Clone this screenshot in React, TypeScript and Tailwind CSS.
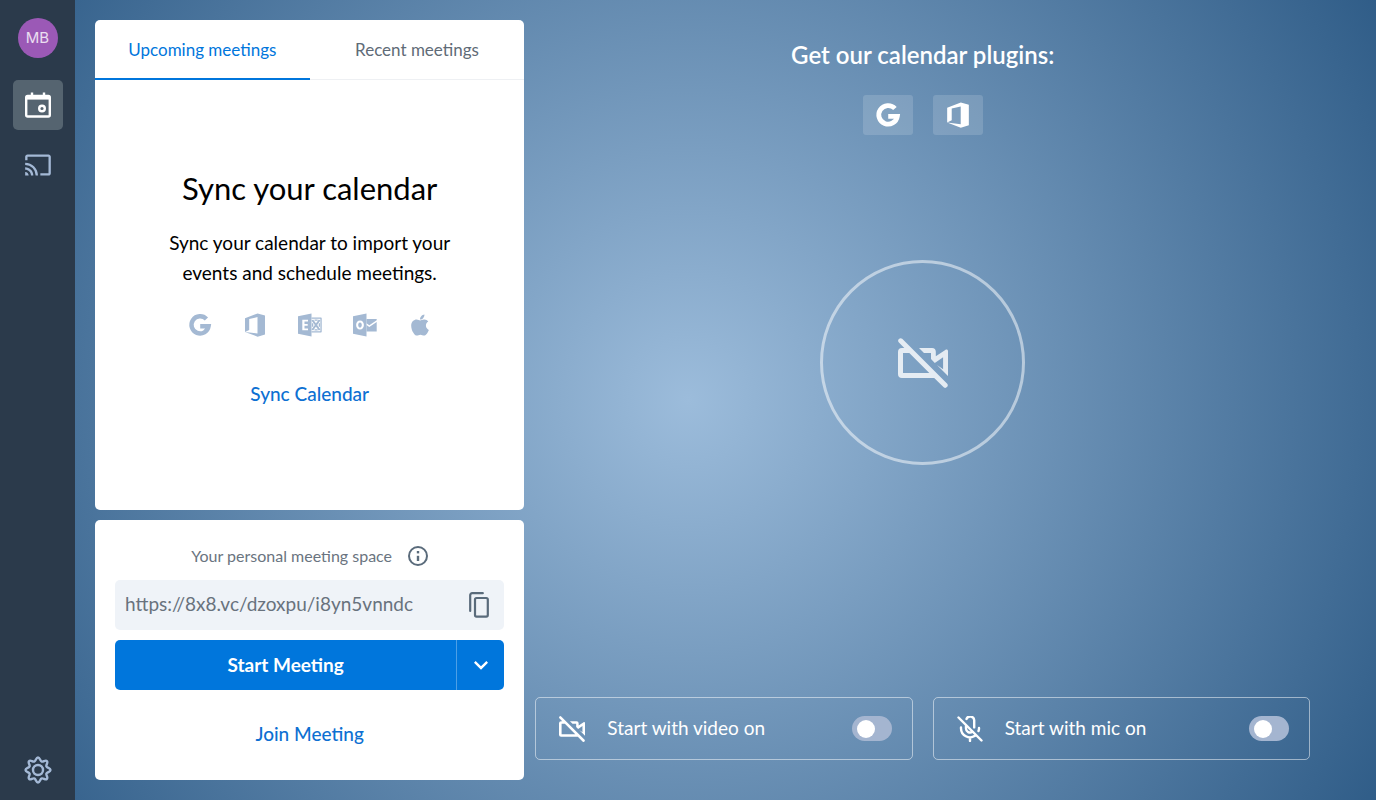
import { useState } from "react";
import type { ReactNode } from "react";
import { FaApple } from "react-icons/fa";
import { MdCast, MdOutlineKeyboardArrowDown } from "react-icons/md";

interface IconProps {
  className?: string;
}

function GoogleIcon({ className }: IconProps) {
  return (
    <svg viewBox="0 0 24 24" className={className} fill="none" stroke="currentColor" strokeWidth="4.4">
      <path d="M18.400 6A8.600 8.600 0 1 0 20.600 13.200H12.200" />
    </svg>
  );
}

function OfficeIcon({ className }: IconProps) {
  return (
    <svg viewBox="0 0 24 24" className={className} fill="currentColor">
      <path d="M2 18.900V5.200L14.600.4 22 2.500v19L14.600 23.700 2 18.900l12.500 1.600V4.100L6.200 6v10.900L2 18.900z" />
    </svg>
  );
}

function ExchangeIcon({ className }: IconProps) {
  return (
    <svg viewBox="0 0 24 24" className={className} fill="currentColor">
      <path
        fillRule="evenodd"
        d="M0 3.200 13.500.4v23.200L0 20.800V3.200zM4.300 6.700v10.600h5.700v-1.900H6.500v-2.600h3.200V11H6.500V8.600H10V6.700H4.300z"
      />
      <path
        fillRule="evenodd"
        d="M13.500 4.600H23a.7.7 0 0 1 .7.7v13.400a.7.7 0 0 1-.7.7h-9.500v-1.200h8.900V5.800h-8.900V4.600z"
      />
      <path d="m14.300 7 7.300 10M21.600 7l-7.300 10" stroke="currentColor" strokeWidth="2" />
      <path d="M16.500 7.200h3.200M16.500 16.800h3.200M14.600 10.200v3.600M21.400 10.200v3.600" stroke="currentColor" strokeWidth="1.300" />
    </svg>
  );
}

function OutlookIcon({ className }: IconProps) {
  return (
    <svg viewBox="0 0 24 24" className={className} fill="currentColor">
      <path
        fillRule="evenodd"
        d="M0 3.200 13.500.4v23.200L0 20.800V3.200zM7 7.500c-2.300 0-3.900 1.900-3.900 4.500S4.700 16.500 7 16.500s3.900-1.900 3.900-4.500S9.300 7.500 7 7.500zm0 1.900c1.100 0 1.800 1.100 1.800 2.600S8.100 14.600 7 14.600 5.200 13.500 5.200 12 5.900 9.400 7 9.400z"
      />
      <path d="M13.500 6H23.700v1.200l-7.400 5.100-2.800-2.100V6zm0 6 2.800 2.100 7.400-5v9.300H13.500V12z" />
    </svg>
  );
}

function CalendarIcon({ className }: IconProps) {
  return (
    <svg viewBox="0 0 26 26" className={className} fill="none" stroke="currentColor">
      <rect x="1.200" y="4" width="23.600" height="20.500" rx="1.500" strokeWidth="2.400" />
      <path d="M1.500 5.600h23" strokeWidth="4" />
      <path d="M7 .5v4M19 .5v4" strokeWidth="2.400" />
      <circle cx="17" cy="16.500" r="2.800" strokeWidth="2.400" />
    </svg>
  );
}

function GearIcon({ className }: IconProps) {
  return (
    <svg viewBox="0 0 28 28" className={className} fill="none" stroke="currentColor" strokeWidth="2.400" strokeLinejoin="round">
      <path d="M14 1.500C16 1.500 16 5.100 17.700 5.600 19.400 6.200 21.500 3.500 22.900 5.100 24.400 6.500 21.800 8.700 22.400 10.400 23 12 26.500 12 26.500 14S23 16 22.400 17.600c-.6 1.700 2 3.900.5 5.300-1.400 1.600-3.500-1.100-5.200-.5C16 22.900 16 26.500 14 26.500S12 22.900 10.300 22.400c-1.700-.6-3.800 2.100-5.200.5-1.500-1.400 1.100-3.600.5-5.300C5 16 1.500 16 1.500 14S5 12 5.600 10.400C6.200 8.700 3.600 6.500 5.100 5.100 6.500 3.500 8.600 6.200 10.300 5.600 12 5.100 12 1.500 14 1.500z" />
      <circle cx="14" cy="14" r="5" />
    </svg>
  );
}

function InfoIcon({ className }: IconProps) {
  return (
    <svg viewBox="0 0 20 20" className={className} fill="none" stroke="currentColor" strokeWidth="2">
      <circle cx="10" cy="10" r="9" />
      <path d="M10 9.800v5.200" strokeWidth="2.400" />
      <path d="M10 5v2.400" strokeWidth="2.400" />
    </svg>
  );
}

function CopyIcon({ className }: IconProps) {
  return (
    <svg viewBox="0 0 20 26" className={className} fill="none" stroke="currentColor" strokeWidth="2.200" strokeLinecap="round">
      <path d="M1.200 19V3.200a2 2 0 0 1 2-2h10.600" />
      <rect x="6" y="6" width="12.800" height="18.600" rx="1.500" />
    </svg>
  );
}

function VideoOffIcon({ className }: IconProps) {
  return (
    <svg viewBox="0 0 50 50" className={className} fill="currentColor">
      <path d="M4.200.8 49.200 45.800a2.500 2.500 0 0 1-3.500 3.500L36.200 39.900H4a4 4 0 0 1-4-4V14a4 4 0 0 1 4-4h2.300L.7 4.300A2.500 2.500 0 0 1 4.200.8zM5 15v20h26.300l-20-20H5z" />
      <path d="M21 10h13a3.800 3.800 0 0 1 3.800 3.800v4.400L47.300 12c1.400-.9 2.700-.2 2.700 1.300v24.700L39 27l6.100 4.200V19.300L36.800 24.900 33 21V15h-7L21 10z" />
    </svg>
  );
}

function MicOffIcon({ className }: IconProps) {
  return (
    <svg viewBox="0 0 26 26" className={className} fill="none" stroke="currentColor" strokeWidth="2.400" strokeLinecap="round">
      <path d="m1.500 1.500 23 23" />
      <path d="M9.500 3a4 4 0 0 1 7.700 1.800v6.600M9 10v2.500a4 4 0 0 0 6.300 3.300" />
      <path d="M4 11.500v1a9 9 0 0 0 14 7.300M22 12v.8a9 9 0 0 1-.5 2.200M13 21.500V25" />
    </svg>
  );
}

interface ToggleCardProps {
  label: string;
  icon: ReactNode;
}

function ToggleCard({ label, icon }: ToggleCardProps) {
  const [on, setOn] = useState(false);

  return (
    <label className="flex h-[63px] flex-1 cursor-pointer items-center rounded-[5px] border border-white/50 pr-5 pl-[23px] text-[19px] leading-7 text-white">
      {icon}
      <span className="ml-[22px] flex-1 pb-0.5">{label}</span>
      <input
        type="checkbox"
        checked={on}
        onChange={(e) => setOn(e.target.checked)}
        className="flex h-[25px] w-10 appearance-none items-center rounded-full bg-[#a4b5d0] px-[5px] before:block before:h-[18px] before:w-[18px] before:rounded-full before:bg-white checked:bg-[#0076dc] checked:before:ml-auto"
      />
    </label>
  );
}

export default function App() {
  const [tab, setTab] = useState("upcoming");
  const tabs = [
    { id: "upcoming", label: "Upcoming meetings" },
    { id: "recent", label: "Recent meetings" },
  ];

  return (
    <div className="flex min-h-screen bg-[radial-gradient(circle_at_center,#9cbcdb_0%,#305d88_100%)] font-['Lato','Noto_Sans',sans-serif]">
      {/* Sidebar */}
      <nav className="flex w-[75px] shrink-0 flex-col items-center bg-[#2b3a4b] pt-[18px] pb-4 text-[#a4b9d6]">
        <button className="h-10 w-10 rounded-full bg-[#9b59b6] font-['Inter',sans-serif] text-[15px] text-white/80">
          MB
        </button>
        <button aria-label="Calendar" className="mt-[22px] flex h-[50px] w-[50px] items-center justify-center rounded-[5px] bg-[#556470] text-white">
          <CalendarIcon className="h-[26px] w-[26px]" />
        </button>
        <button aria-label="Cast" className="mt-[21px]">
          <MdCast className="h-7 w-7" />
        </button>
        <button aria-label="Settings" className="mt-auto">
          <GearIcon className="h-7 w-7" />
        </button>
      </nav>

      <div className="flex flex-1">
        {/* Meetings column */}
        <div className="ml-5 flex w-[33%] shrink-0 flex-col gap-2.5 py-5">
          <section className="flex flex-1 flex-col overflow-hidden rounded-[5px] bg-white">
            <div className="flex h-[60px]">
              {tabs.map((t) => (
                <button
                  key={t.id}
                  onClick={() => setTab(t.id)}
                  className={
                    tab === t.id
                      ? "flex-1 border-b-2 border-[#0076dc] pt-px text-[17px] text-[#0076dc]"
                      : "flex-1 border-b border-[#eef0f3] text-[17px] text-[#5f6b77]"
                  }
                >
                  {t.label}
                </button>
              ))}
            </div>
            <div className="flex flex-1 flex-col items-center justify-center pb-3 text-center">
              <h1 className="text-[31px] leading-9 text-black">Sync your calendar</h1>
              <p className="mt-[22px] w-[300px] text-[19px] leading-[30px] text-black">
                Sync your calendar to import your events and schedule meetings.
              </p>
              <div className="mt-[25px] flex gap-[31px] text-[#a4b9d3]">
                <GoogleIcon className="h-6 w-6" />
                <OfficeIcon className="h-6 w-6" />
                <ExchangeIcon className="h-6 w-6" />
                <OutlookIcon className="h-6 w-6" />
                <FaApple className="h-6 w-6" />
              </div>
              <button className="mt-[43px] text-[19px] leading-7 font-medium text-[#0d70d2]">Sync Calendar</button>
            </div>
          </section>

          <section className="flex h-[260px] flex-col rounded-[5px] bg-white px-5 pt-6">
            <div className="flex h-6 items-center justify-center gap-4 text-base text-[#6a7480]">
              <label htmlFor="space">Your personal meeting space</label>
              <InfoIcon className="h-5 w-5 text-[#5a6b7b]" />
            </div>
            <div className="mt-3 flex h-[50px] items-center rounded-[5px] bg-[#eff3f8] pr-[15px] pl-2.5">
              <input
                id="space"
                readOnly
                value="https://8x8.vc/dzoxpu/i8yn5vnndc"
                className="min-w-0 flex-1 bg-transparent pb-0.5 text-[19px] text-[#68727d] outline-none"
              />
              <button aria-label="Copy link" className="text-[#5a6b7b]">
                <CopyIcon className="h-[26px] w-5" />
              </button>
            </div>
            <div className="mt-2.5 flex h-[50px] overflow-hidden rounded-[5px] bg-[#0076dc] text-white">
              <button className="flex-1 text-[19px] font-bold">Start Meeting</button>
              <button aria-label="More options" className="flex w-12 items-center justify-center border-l border-white/30">
                <MdOutlineKeyboardArrowDown className="h-7 w-7" />
              </button>
            </div>
            <button className="mt-[30px] text-[19px] leading-7 font-medium text-[#0d70d2]">Join Meeting</button>
          </section>
        </div>

        {/* Preview area */}
        <main className="flex flex-1 flex-col items-center pt-10 pr-[66px] pb-10 pl-[11px]">
          <h2 className="text-2xl leading-[30px] font-semibold text-white">Get our calendar plugins:</h2>
          <div className="mt-[25px] flex gap-5 text-white">
            <button aria-label="Google" className="flex h-10 w-[50px] items-center justify-center rounded-[3px] bg-white/15">
              <GoogleIcon className="h-[26px] w-[26px]" />
            </button>
            <button aria-label="Office" className="flex h-10 w-[50px] items-center justify-center rounded-[3px] bg-white/15">
              <OfficeIcon className="h-[26px] w-[26px]" />
            </button>
          </div>
          <div className="mt-[125px] flex h-[205px] w-[205px] items-center justify-center rounded-full border-[3px] border-white/50">
            <VideoOffIcon className="h-[50px] w-[50px] text-white/80" />
          </div>
          <div className="mt-auto flex w-full gap-5">
            <ToggleCard label="Start with video on" icon={<VideoOffIcon className="h-[26px] w-[26px]" />} />
            <ToggleCard label="Start with mic on" icon={<MicOffIcon className="h-[26px] w-[26px]" />} />
          </div>
        </main>
      </div>
    </div>
  );
}
